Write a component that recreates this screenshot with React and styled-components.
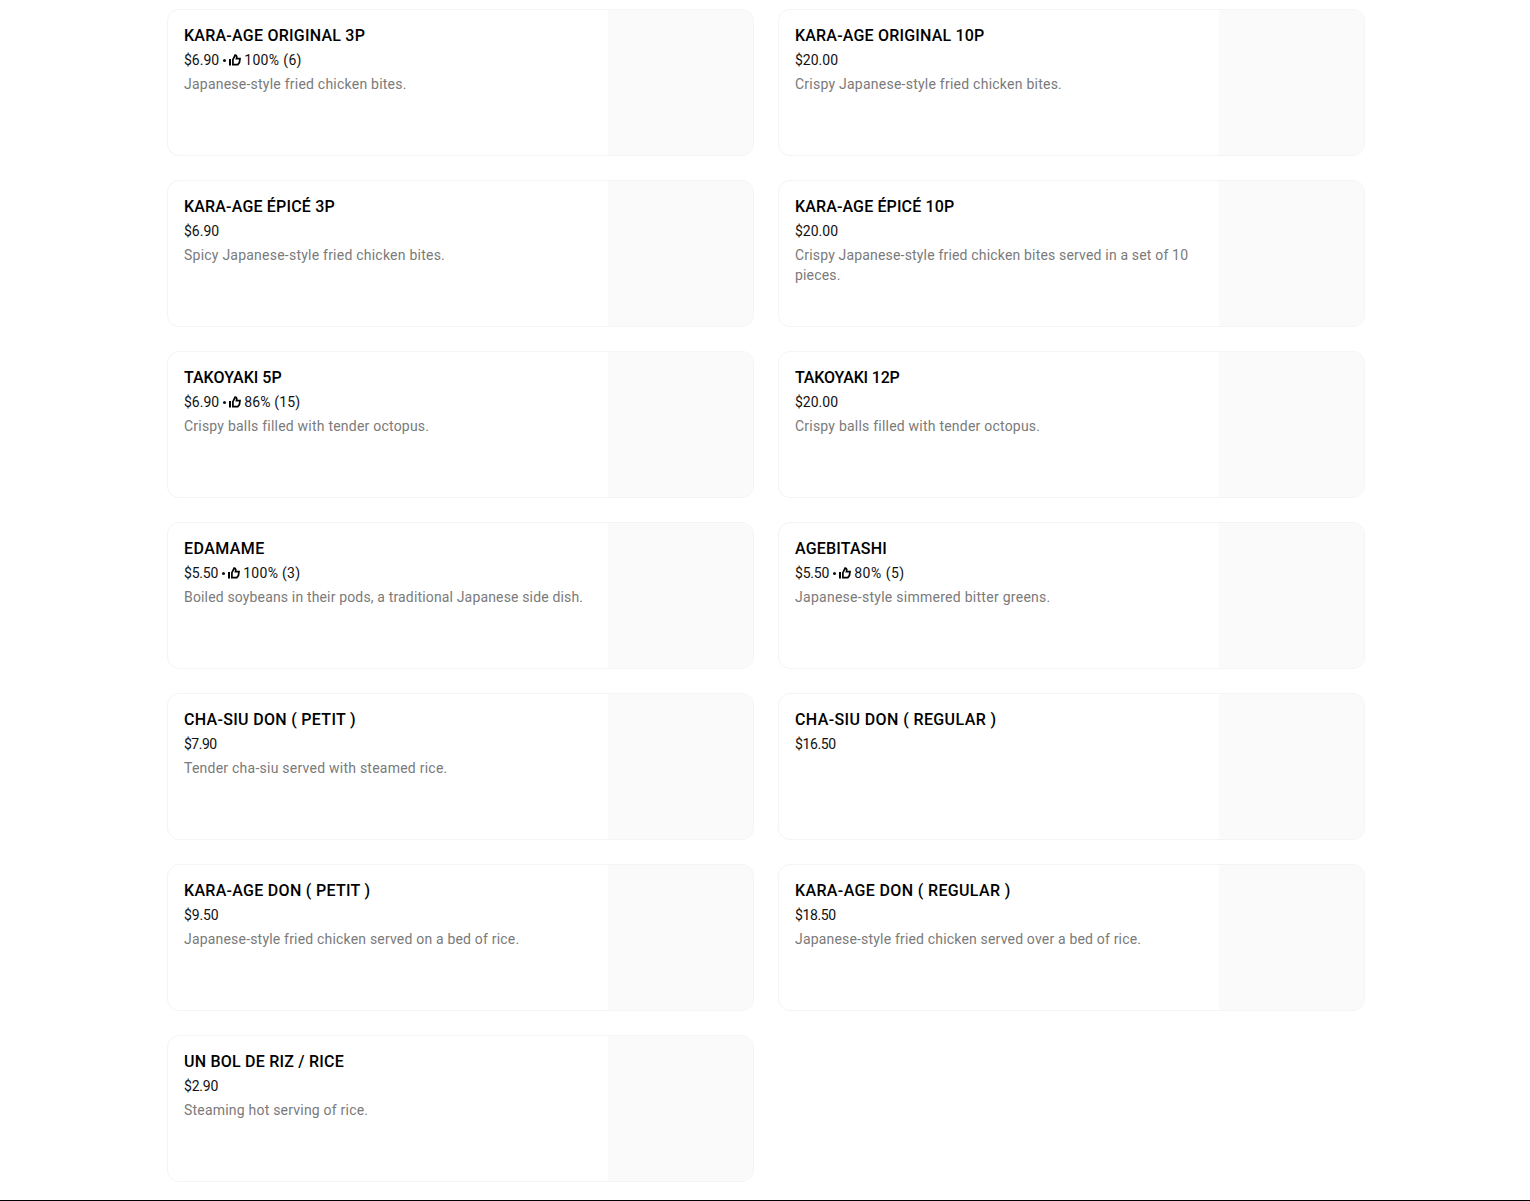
import React from 'react';
import styled, { createGlobalStyle } from 'styled-components';

const GlobalStyle = createGlobalStyle`
* { box-sizing: border-box; }
body {
  margin: 0;
  background-color: #fff;
  font-family: Roboto, "Liberation Sans", sans-serif;
  overflow: hidden;
}
`;

const Page = styled.div`
height: 1201px;
display: flex;
flex-direction: column;
justify-content: space-between;
`;

const MenuGrid = styled.ul`
display: grid;
grid-template-columns: 587px 587px;
grid-auto-rows: 147px;
gap: 24px;
margin: 0;
padding: 9px 0 0 167px;
list-style: none;
`;

const Card = styled.li`
display: flex;
justify-content: space-between;
border: 1px solid #f4f4f4;
border-radius: 12px;
overflow: hidden;
`;

const CardText = styled.div`
width: 440px;
padding: 14px 16px;
`;

const Title = styled.h3`
width: fit-content;
margin: 0;
font-size: 16px;
font-weight: 500;
line-height: 24px;
letter-spacing: ${(props) => props.$track || 0}px;
white-space: nowrap;
color: #000;
`;

const PriceRow = styled.div`
display: flex;
align-items: center;
width: fit-content;
margin-top: 2px;
font-size: 14px;
line-height: 20px;
white-space: nowrap;
color: #111;
`;

const PriceText = styled.span`
letter-spacing: ${(props) => props.$track || 0}px;
`;

const Dot = styled.span`
width: 3px;
height: 3px;
margin: 1px 3px 0 4px;
border-radius: 50%;
background-color: #111;
`;

const ThumbIcon = styled.svg`
width: 12px;
height: 12px;
margin-right: 3px;
`;

const Description = styled.p`
width: fit-content;
margin: 4px 0 0;
font-size: 14px;
line-height: 20px;
letter-spacing: ${(props) => props.$track || 0}px;
color: #7a7a7a;
`;

const Photo = styled.div`
width: 145px;
background-color: #fafafa;
`;

const FooterEdge = styled.footer`
height: 1px;
background-color: #000;
`;

// track: 글자 간격 [제목, 가격, 평점, 설명]
const menu = [
  { title: 'KARA-AGE ORIGINAL 3P', price: '$6.90', rating: '100% (6)', desc: 'Japanese-style fried chicken bites.', track: [0.24, 0, 0.35, 0.23] },
  { title: 'KARA-AGE ORIGINAL 10P', price: '$20.00', desc: 'Crispy Japanese-style fried chicken bites.', track: [0.19, 0, 0, 0.24] },
  { title: 'KARA-AGE ÉPICÉ 3P', price: '$6.90', desc: 'Spicy Japanese-style fried chicken bites.', track: [0.18, 0, 0, 0.23] },
  { title: 'KARA-AGE ÉPICÉ 10P', price: '$20.00', desc: 'Crispy Japanese-style fried chicken bites served in a set of 10 pieces.', track: [0.13, 0, 0, 0.175] },
  { title: 'TAKOYAKI 5P', price: '$6.90', rating: '86% (15)', desc: 'Crispy balls filled with tender octopus.', track: [0, 0, 0.15, 0.22] },
  { title: 'TAKOYAKI 12P', price: '$20.00', desc: 'Crispy balls filled with tender octopus.', track: [-0.17, 0, 0, 0.22] },
  { title: 'EDAMAME', price: '$5.50', rating: '100% (3)', desc: 'Boiled soybeans in their pods, a traditional Japanese side dish.', track: [0.43, -0.2, 0.3, 0.155] },
  { title: 'AGEBITASHI', price: '$5.50', rating: '80% (5)', desc: 'Japanese-style simmered bitter greens.', track: [0.2, -0.2, 0.5, 0.27] },
  { title: 'CHA-SIU DON ( PETIT )', price: '$7.90', desc: 'Tender cha-siu served with steamed rice.', track: [0.31, -0.5, 0, 0.24] },
  { title: 'CHA-SIU DON ( REGULAR )', price: '$16.50', track: [0.39, -0.4, 0, 0] },
  { title: 'KARA-AGE DON ( PETIT )', price: '$9.50', desc: 'Japanese-style fried chicken served on a bed of rice.', track: [0.29, -0.15, 0, 0.19] },
  { title: 'KARA-AGE DON ( REGULAR )', price: '$18.50', desc: 'Japanese-style fried chicken served over a bed of rice.', track: [0.36, -0.4, 0, 0.18] },
  { title: 'UN BOL DE RIZ / RICE', price: '$2.90', desc: 'Steaming hot serving of rice.', track: [0.22, -0.2, 0, 0.21] },
];

const Thumb = () => (
  <ThumbIcon viewBox="0 0 12 12">
    <path d="M0 5h2v6.5H0z" fill="#000" />
    <path d="M3.9 10.6V5.6L6.2 1C7.7 1.3 8.1 2.6 7.5 4.6H11L10.4 8.6L8.8 10.6Z" fill="none" stroke="#000" strokeWidth="1.7" />
  </ThumbIcon>
);

const App = () => {
  return (
    <Page>
      <GlobalStyle />
      <MenuGrid>
        {menu.map((item) => (
          <Card key={item.title}>
            <CardText>
              <Title $track={item.track[0]}>{item.title}</Title>
              <PriceRow>
                <PriceText $track={item.track[1]}>{item.price}</PriceText>
                {item.rating && (
                  <>
                    <Dot />
                    <Thumb />
                    <PriceText $track={item.track[2]}>{item.rating}</PriceText>
                  </>
                )}
              </PriceRow>
              {item.desc && <Description $track={item.track[3]}>{item.desc}</Description>}
            </CardText>
            <Photo />
          </Card>
        ))}
      </MenuGrid>
      <FooterEdge />
    </Page>
  );
};

export default App;
